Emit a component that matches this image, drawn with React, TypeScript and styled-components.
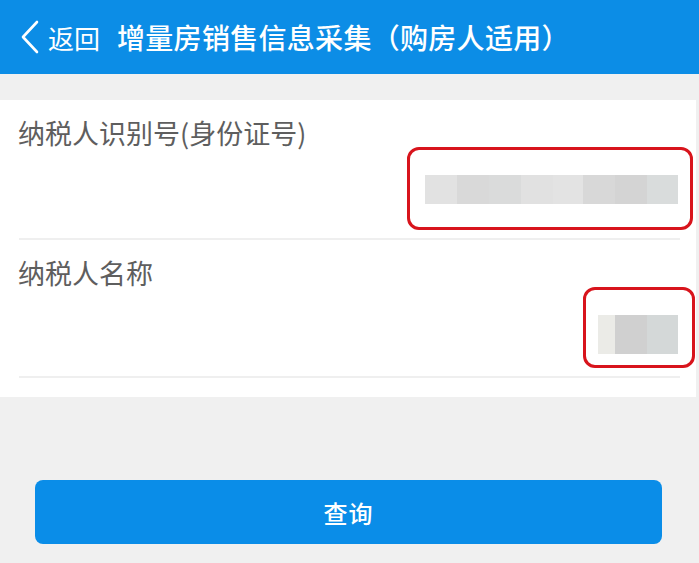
import React from 'react';
import styled, { createGlobalStyle } from 'styled-components';

const GlobalStyle = createGlobalStyle`
  html, body {
    margin: 0;
    padding: 0;
    background: #f0f0f0;
    font-family: "Noto Sans CJK SC", "Noto Sans", sans-serif;
  }
`;

const Page = styled.div`
  width: 699px;
  height: 563px;
  background: #f0f0f0;
  overflow: hidden;
`;

const Header = styled.header`
  height: 74px;
  background: #0c8de6;
  color: #fff;
  display: flex;
  align-items: center;
  padding-left: 20px;
  box-sizing: border-box;
`;

const Back = styled.div`
  display: flex;
  align-items: center;
  gap: 9px;
  font-size: 26px;
  margin-right: 17px;
`;

const Title = styled.h1`
  margin: 0;
  font-size: 28px;
  font-weight: 500;
  letter-spacing: 0.3px;
`;

const Panel = styled.section`
  margin-top: 26px;
  width: 696px;
  background: #fff;
  padding-bottom: 19px;
`;

const Row = styled.div`
  display: flex;
  flex-direction: column;
  padding: 20px 3px 8px 18px;
`;

const Label = styled.div`
  font-size: 27px;
  line-height: 26px;
  color: #5e5e5e;
`;

const Highlight = styled.div<{ $pad: string; $right?: number }>`
  align-self: flex-end;
  margin-top: 1px;
  margin-right: ${(p) => p.$right ?? 0}px;
  border: 3px solid #d8141c;
  border-radius: 12px;
  padding: ${(p) => p.$pad};
  display: flex;
`;

const Mosaic = styled.div<{ $h: number }>`
  display: flex;
  height: ${(p) => p.$h}px;
`;

const Cell = styled.div<{ $w: number; $c: string }>`
  width: ${(p) => p.$w}px;
  background: ${(p) => p.$c};
`;

const Divider = styled.div`
  height: 2px;
  background: #efefef;
  margin: 0 16px 0 19px;
`;

const Footer = styled.div`
  padding: 83px 37px 0 35px;
`;

const Button = styled.button`
  width: 100%;
  height: 64px;
  border: none;
  border-radius: 8px;
  background: #0a8de8;
  color: #fff;
  font-family: "Noto Sans CJK SC", sans-serif;
  font-size: 24px;
  font-weight: 500;
  letter-spacing: 1px;
`;

const idCells: [number, string][] = [
  [32, '#e2e2e2'],
  [32, '#d9d9d9'],
  [32, '#dadbdb'],
  [32, '#e1e1e1'],
  [30, '#e3e3e3'],
  [32, '#d8d8d8'],
  [32, '#d4d4d4'],
  [31, '#d9dcdc'],
];

const nameCells: [number, string][] = [
  [17, '#ebebe7'],
  [32, '#d0d0d0'],
  [31, '#d4d8d8'],
];

function ChevronLeft() {
  return (
    <svg width="19" height="34" viewBox="0 0 19 34" fill="none">
      <path d="M17 2 L3 17 L17 32" stroke="#fff" strokeWidth="2.6" strokeLinecap="round" strokeLinejoin="round" />
    </svg>
  );
}

export default function App() {
  return (
    <Page>
      <GlobalStyle />
      <Header>
        <Back>
          <ChevronLeft />
          <span>返回</span>
        </Back>
        <Title>增量房销售信息采集（购房人适用）</Title>
      </Header>
      <Panel>
        <Row>
          <Label>纳税人识别号(身份证号)</Label>
          <Highlight $pad="25px 12px 23px 15px">
            <Mosaic $h={29}>
              {idCells.map(([w, c], i) => (
                <Cell key={i} $w={w} $c={c} />
              ))}
            </Mosaic>
          </Highlight>
        </Row>
        <Divider />
        <Row>
          <Label>纳税人名称</Label>
          <Highlight $pad="25px 14px 11px 12px" $right={-2}>
            <Mosaic $h={39}>
              {nameCells.map(([w, c], i) => (
                <Cell key={i} $w={w} $c={c} />
              ))}
            </Mosaic>
          </Highlight>
        </Row>
        <Divider />
      </Panel>
      <Footer>
        <Button>查询</Button>
      </Footer>
    </Page>
  );
}
